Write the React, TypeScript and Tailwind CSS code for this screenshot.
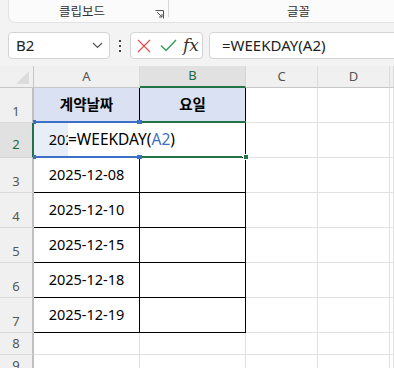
import React from "react"

const dates = ["2025-12-01", "2025-12-08", "2025-12-10", "2025-12-15", "2025-12-18", "2025-12-19"]
const colLetters = ["A", "B", "C", "D", ""]

function Launcher() {
  return (
    <svg width="9" height="9" viewBox="0 0 9 9" className="absolute right-[4px] top-[10px]">
      <path d="M0.5 0.5 H8.5 V8.5" fill="none" stroke="#555" strokeWidth="1" />
      <path d="M2 2 L7 7 M4 7 H7 V4" fill="none" stroke="#555" strokeWidth="1" />
    </svg>
  )
}

function Cell({ row, col }: { row: number; col: number }) {
  const inTable = row <= 7 && col <= 1
  let cls = "border-r border-b flex items-center justify-center text-[14.5px] text-black overflow-hidden whitespace-nowrap "
  if (inTable) cls += "border-black "
  else cls += "border-[#e1e1e1] bg-white "
  if (row === 1) cls += "bg-[#d9e1f2] font-bold "
  else if (row === 2 && col === 0) cls += "bg-[#e8eef8] "
  else if (inTable) cls += "bg-white "

  let text = ""
  if (row === 1 && col === 0) text = "계약날짜"
  if (row === 1 && col === 1) text = "요일"
  if (row >= 2 && row <= 7 && col === 0) text = dates[row - 2]

  return <div className={cls}>{text}</div>
}

export default function App() {
  const rows = [1, 2, 3, 4, 5, 6, 7, 8, 9]

  return (
    <div className="w-[394px] h-[368px] overflow-hidden bg-[#f3f3f3] font-['Noto_Sans','Noto_Sans_CJK_KR',sans-serif] text-[#222]">
      {/* Ribbon group labels */}
      <div className="h-[23px] pl-[8px]">
        <div className="h-full bg-[#fbfbfb] rounded-bl-[7px] border-b border-l border-[#e2e2e2] flex">
          <div className="relative w-[159px] flex items-center justify-center pr-[13px] pt-[2px] text-[12.5px] text-[#333]">
            클립보드
            <Launcher />
          </div>
          <div className="w-px h-[17px] bg-[#d8d8d8]" />
          <div className="flex-1 flex items-center justify-center pl-[34px] pt-[2px] text-[12.5px] text-[#333]">글꼴</div>
        </div>
      </div>

      {/* Formula bar */}
      <div className="mt-[9px] h-[27px] flex">
        <div className="ml-[8px] w-[102px] rounded-[4px] border border-[#d4d4d4] bg-white flex items-center justify-between pl-[7px] pr-[6px]">
          <span className="text-[15px] text-[#222]">B2</span>
          <svg width="11" height="7" viewBox="0 0 11 7">
            <path d="M1 1 L5.5 5.5 L10 1" fill="none" stroke="#555" strokeWidth="1.2" />
          </svg>
        </div>
        <div className="w-[20px] flex flex-col items-center justify-center gap-[3px]">
          <div className="w-[2px] h-[2px] bg-[#444]" />
          <div className="w-[2px] h-[2px] bg-[#444]" />
          <div className="w-[2px] h-[2px] bg-[#444]" />
        </div>
        <div className="w-[73px] rounded-[4px] border border-[#d4d4d4] bg-white flex items-center pl-[6px]">
          <svg width="14" height="14" viewBox="0 0 14 14">
            <path d="M1 1 L13 13 M13 1 L1 13" stroke="#e25050" strokeWidth="1.3" fill="none" />
          </svg>
          <svg width="17" height="13" viewBox="0 0 17 13" className="ml-[9px]">
            <path d="M1 6.5 L6 11.5 L16 1" stroke="#2f9c5a" strokeWidth="1.4" fill="none" />
          </svg>
          <span className="ml-[6px] text-[17px] italic text-[#333] font-['DejaVu_Serif',serif] leading-none">fx</span>
        </div>
        <div className="ml-[6px] flex-1 -mr-[10px] rounded-[4px] border border-[#d4d4d4] bg-white flex items-center pl-[12px] text-[15px] text-[#222]">
          =WEEKDAY(A2)
        </div>
      </div>

      {/* Sheet grid */}
      <div className="relative mt-[7px] grid grid-cols-[34px_106px_106px_72px_72px_1fr] grid-rows-[22px_repeat(7,35px)_22px_22px]">
        <div className="relative bg-[#f0f0f0] border-r border-b border-[#c6c6c6]">
          <svg width="13" height="13" viewBox="0 0 13 13" className="absolute right-[4px] bottom-[3px]">
            <path d="M13 0 L13 13 L0 13 Z" fill="#dcdcdc" />
          </svg>
        </div>
        {colLetters.map((c) =>
          c === "B" ? (
            <div key={c} className="bg-[#e1e1e1] border-r border-b-2 border-r-[#d4d4d4] border-b-[#217346] flex items-center justify-center text-[13px] text-[#1e6b41]">
              {c}
            </div>
          ) : (
            <div key={c || "E"} className="bg-[#f0f0f0] border-r border-b border-r-[#dadada] border-b-[#c6c6c6] flex items-center justify-center text-[13px] text-[#555]">
              {c}
            </div>
          )
        )}

        {rows.map((r) => (
          <React.Fragment key={r}>
            {r === 2 ? (
              <div className="bg-[#e1e1e1] border-r-2 border-b border-r-[#217346] border-b-[#d4d4d4] flex items-end justify-center pb-[3px] text-[13px] text-[#1e6b41]">
                {r}
              </div>
            ) : (
              <div className="bg-[#f0f0f0] border-r-2 border-b border-r-[#c0c0c0] border-b-[#dadada] flex items-end justify-center pb-[3px] text-[13px] text-[#555] leading-[15px]">
                {r}
              </div>
            )}
            {[0, 1, 2, 3, 4].map((c) => (
              <Cell key={c} row={r} col={c} />
            ))}
          </React.Fragment>
        ))}

        {/* In-cell editor for B2 */}
        <div className="absolute left-[68px] top-[57px] w-[176px] h-[33px] bg-white flex items-center text-[15.5px] text-black whitespace-nowrap">
          =WEEKDAY(<span className="text-[#3c6fc5]">A2</span>)
        </div>

        {/* Reference highlight around A2 */}
        <div className="absolute left-[34px] top-[55px] w-[105px] h-[2px] bg-[#3c6fc5]" />
        <div className="absolute left-[34px] top-[90px] w-[105px] h-[2px] bg-[#3c6fc5]" />
        <div className="absolute left-[33px] top-[54px] w-[3px] h-[4px] bg-[#3c6fc5]" />
        <div className="absolute left-[33px] top-[89px] w-[3px] h-[4px] bg-[#3c6fc5]" />
        <div className="absolute left-[137px] top-[54px] w-[5px] h-[4px] bg-[#3c6fc5]" />
        <div className="absolute left-[137px] top-[89px] w-[5px] h-[4px] bg-[#3c6fc5]" />

        {/* Active cell B2 */}
        <div className="absolute left-[142px] top-[55px] w-[104px] h-[2px] bg-[#217346]" />
        <div className="absolute left-[142px] top-[90px] w-[100px] h-[2px] bg-[#217346]" />
        <div className="absolute left-[243px] top-[88px] w-[6px] h-[6px] bg-[#217346] border border-white" />
      </div>
    </div>
  )
}
